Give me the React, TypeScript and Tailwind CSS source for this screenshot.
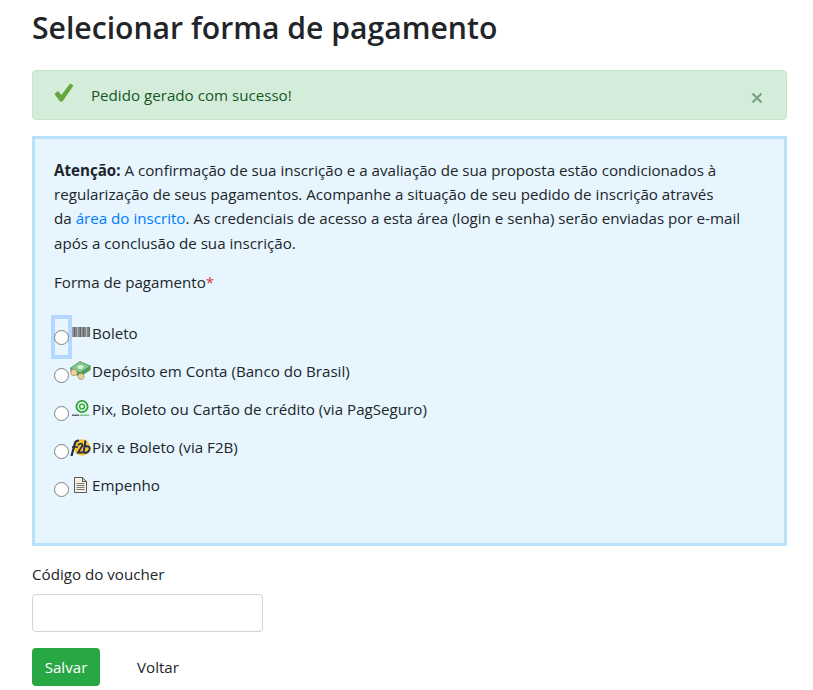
const fontStack = { fontFamily: '"Open Sans", "Noto Sans", sans-serif' }

const BarcodeIcon = () => (
  <svg width="18" height="10" viewBox="0 0 18 10" className="mt-[-3px] shrink-0">
    {[0, 1.5, 3, 4.5, 6, 7.5, 9, 10.5, 12, 13.5, 15, 16.5].map((x, i) => (
      <rect key={x} x={x} y="0" width={i % 3 === 0 ? 0.8 : 1.2} height="10" fill={i % 2 ? "#2a2a2a" : "#8a8a8a"} />
    ))}
  </svg>
)

const MoneyIcon = () => (
  <svg width="21" height="19" viewBox="0 0 21 19" className="mt-[-2px] shrink-0">
    <path d="M0.5 7 L10 0.5 L20.5 5 L20.5 9 L10 16 L0.5 11 Z" fill="#4f9a5c" />
    <path d="M0.5 7 L10 0.5 L20.5 5 L10 12 Z" fill="#7fc98c" stroke="#3f8a4c" strokeWidth="0.6" />
    <ellipse cx="10.5" cy="6" rx="3.2" ry="2" fill="#d5eed8" />
    <circle cx="4" cy="11.5" r="3.2" fill="#e8d49b" stroke="#a98a4b" strokeWidth="0.7" />
    <circle cx="11" cy="15.5" r="3" fill="#e8d49b" stroke="#a98a4b" strokeWidth="0.7" />
  </svg>
)

const PagSeguroIcon = () => (
  <svg width="18" height="17" viewBox="0 0 18 17" className="mt-[-2px] shrink-0">
    <circle cx="10" cy="6.5" r="5.6" fill="#e8f8ea" stroke="#2fa53e" strokeWidth="1.8" />
    <circle cx="10" cy="6.5" r="2.4" fill="none" stroke="#2fa53e" strokeWidth="1.4" />
    <rect x="0" y="14.5" width="7" height="1.5" fill="#666" />
    <rect x="7.5" y="14.5" width="10" height="1.5" fill="#7cc983" />
  </svg>
)

const F2bIcon = () => (
  <svg width="21" height="18" viewBox="0 0 21 18" className="shrink-0">
    <circle cx="12" cy="8.5" r="8.2" fill="#f7c531" />
    <path d="M1.5 17 L5 4 Q5.8 1.5 9 1.5" fill="none" stroke="#27304a" strokeWidth="2.2" />
    <path d="M2 8 H8" stroke="#27304a" strokeWidth="1.6" />
    <path d="M8 6 Q12 3 12.5 6.5 L8 13.5 H13" fill="none" stroke="#27304a" strokeWidth="1.8" />
    <path d="M15.5 1.5 L13.5 14 M15 7.5 Q20.5 6.5 19.5 10.5 Q18.5 14 14 14" fill="none" stroke="#27304a" strokeWidth="2" />
  </svg>
)

const DocIcon = () => (
  <svg width="13" height="16" viewBox="0 0 13 16" className="mt-[-2px] shrink-0">
    <path d="M0.5 0.5 H8.5 L12.5 4.5 V15.5 H0.5 Z" fill="#f5f1e2" stroke="#5a5a5a" />
    <path d="M8.5 0.5 V4.5 H12.5 Z" fill="#d8d8d8" stroke="#5a5a5a" />
    <path d="M2.5 6.5 H10.5 M2.5 8.5 H10.5 M2.5 10.5 H10.5 M2.5 12.5 H10.5" stroke="#777" />
  </svg>
)

const paymentOptions = [
  { label: "Boleto", icon: <BarcodeIcon />, focused: true },
  { label: "Depósito em Conta (Banco do Brasil)", icon: <MoneyIcon /> },
  { label: "Pix, Boleto ou Cartão de crédito (via PagSeguro)", icon: <PagSeguroIcon /> },
  { label: "Pix e Boleto (via F2B)", icon: <F2bIcon /> },
  { label: "Empenho", icon: <DocIcon /> },
]

const PaymentOption = ({ label, icon, focused }: { label: string; icon: React.ReactNode; focused?: boolean }) => (
  <label className="flex h-[38px] items-center text-[15.15px] text-[#212529]">
    <span className="relative flex h-[38px] w-[15px] shrink-0 items-center justify-center">
      {focused && <span className="absolute left-[-3px] top-0 h-[44px] w-[21px] border-[4px] border-[#b3d7ff]" />}
      <span className="relative mt-[7px] block h-[15px] w-[15px] shrink-0 rounded-full border border-[#808080] bg-white" />
    </span>
    <span className="flex w-[23px] shrink-0 justify-center">{icon}</span>
    <span>{label}</span>
  </label>
)

const App = () => {
  return (
    <div className="h-[690px] overflow-hidden bg-white pl-[32px] pr-[26px] text-[#212529]" style={fontStack}>
      <h1 className="pt-[8px] text-[30.15px] font-semibold leading-[40px]">Selecionar forma de pagamento</h1>

      <div className="mt-[22px] flex h-[50px] items-center justify-between rounded border border-[#c3e6cb] bg-[#d4edda] pl-[21px] pr-[23px] text-[#155724]">
        <div className="flex items-center gap-[17px]">
          <svg width="20" height="19" viewBox="0 0 20 19" className="mt-[-4px]">
            <path d="M0.5 11 L4 8 L7.5 12 L16 0.5 L19.5 2.5 L8.5 18.5 L6 18.5 Z" fill="#66a63f" />
          </svg>
          <span className="text-[15.15px]">Pedido gerado com sucesso!</span>
        </div>
        <svg width="12" height="12" viewBox="0 0 12 12" className="mt-[6px]">
          <path d="M1.5 1.5 L10.5 10.5 M10.5 1.5 L1.5 10.5" stroke="#7aa386" strokeWidth="2.2" />
        </svg>
      </div>

      <div className="mt-[16px] h-[410px] border-[3px] border-[#b8e2fb] bg-[#e6f5fe] pl-[19px] pr-[30px] pt-[19px]">
        <p className="text-[15.15px] leading-[24.2px]">
          <strong className="font-bold">Atenção:</strong> A confirmação de sua inscrição e a avaliação de sua proposta estão condicionados à
          regularização de seus pagamentos. Acompanhe a situação de seu pedido de inscrição através
          <br />
          da <span className="text-[#007bff]">área do inscrito</span>. As credenciais de acesso a esta área (login e senha) serão enviadas por e-mail
          após a conclusão de sua inscrição.
        </p>
        <div className="mt-[15px] text-[15.15px] leading-[24px]">
          Forma de pagamento<span className="text-[#dc3545]">*</span>
        </div>
        <div className="mt-[21px] flex flex-col">
          {paymentOptions.map((option) => (
            <PaymentOption key={option.label} {...option} />
          ))}
        </div>
      </div>

      <div className="mt-[16px] text-[15.15px] leading-[24px]">Código do voucher</div>
      <input className="mt-[8px] block h-[38px] w-[231px] rounded border border-[#ced4da] bg-white" />
      <div className="mt-[16px] flex items-center gap-[19px]">
        <button className="h-[38px] w-[68px] rounded bg-[#28a745] text-[15.15px] text-white">Salvar</button>
        <button className="h-[38px] w-[78px] text-[15.15px] text-[#212529]">Voltar</button>
      </div>
    </div>
  )
}

export default App
